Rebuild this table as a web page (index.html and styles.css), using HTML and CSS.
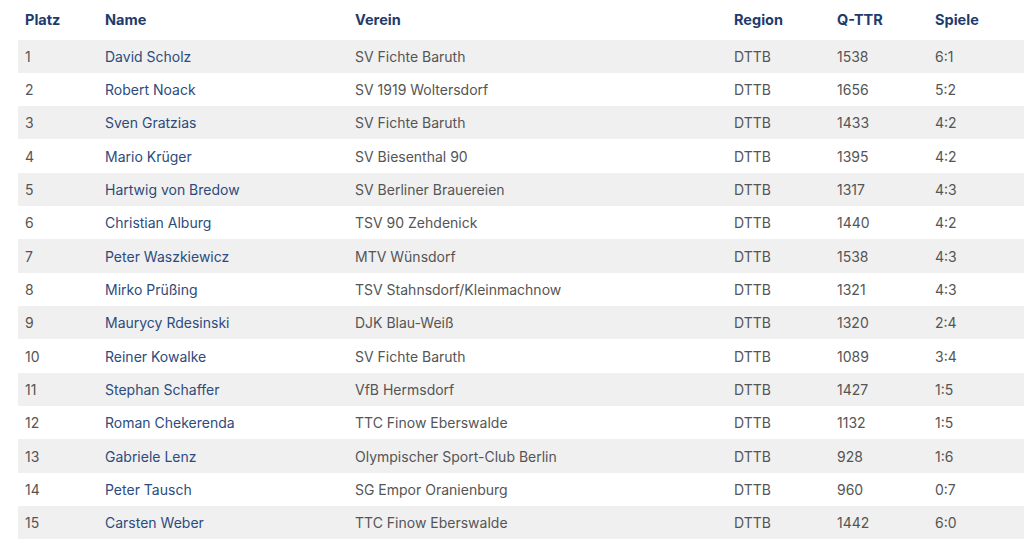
FILE: index.html
```html
<!DOCTYPE html>
<html lang="de">
<head>
<meta charset="utf-8">
<title>Rangliste</title>
<link rel="stylesheet" href="styles.css">
</head>
<body>
<div class="wrap">
<table class="ranking">
<colgroup>
<col class="c-platz"><col class="c-name"><col class="c-verein"><col class="c-region"><col class="c-ttr"><col class="c-spiele">
</colgroup>
<thead>
<tr><th>Platz</th><th>Name</th><th>Verein</th><th>Region</th><th>Q-TTR</th><th>Spiele</th></tr>
</thead>
<tbody>
<tr><td>1</td><td class="name">David Scholz</td><td>SV Fichte Baruth</td><td>DTTB</td><td>1538</td><td>6:1</td></tr>
<tr><td>2</td><td class="name">Robert Noack</td><td>SV 1919 Woltersdorf</td><td>DTTB</td><td>1656</td><td>5:2</td></tr>
<tr><td>3</td><td class="name">Sven Gratzias</td><td>SV Fichte Baruth</td><td>DTTB</td><td>1433</td><td>4:2</td></tr>
<tr><td>4</td><td class="name">Mario Krüger</td><td>SV Biesenthal 90</td><td>DTTB</td><td>1395</td><td>4:2</td></tr>
<tr><td>5</td><td class="name">Hartwig von Bredow</td><td>SV Berliner Brauereien</td><td>DTTB</td><td>1317</td><td>4:3</td></tr>
<tr><td>6</td><td class="name">Christian Alburg</td><td>TSV 90 Zehdenick</td><td>DTTB</td><td>1440</td><td>4:2</td></tr>
<tr><td>7</td><td class="name">Peter Waszkiewicz</td><td>MTV Wünsdorf</td><td>DTTB</td><td>1538</td><td>4:3</td></tr>
<tr><td>8</td><td class="name">Mirko Prüßing</td><td>TSV Stahnsdorf/Kleinmachnow</td><td>DTTB</td><td>1321</td><td>4:3</td></tr>
<tr><td>9</td><td class="name">Maurycy Rdesinski</td><td>DJK Blau-Weiß</td><td>DTTB</td><td>1320</td><td>2:4</td></tr>
<tr><td>10</td><td class="name">Reiner Kowalke</td><td>SV Fichte Baruth</td><td>DTTB</td><td>1089</td><td>3:4</td></tr>
<tr><td>11</td><td class="name">Stephan Schaffer</td><td>VfB Hermsdorf</td><td>DTTB</td><td>1427</td><td>1:5</td></tr>
<tr><td>12</td><td class="name">Roman Chekerenda</td><td>TTC Finow Eberswalde</td><td>DTTB</td><td>1132</td><td>1:5</td></tr>
<tr><td>13</td><td class="name">Gabriele Lenz</td><td>Olympischer Sport-Club Berlin</td><td>DTTB</td><td>928</td><td>1:6</td></tr>
<tr><td>14</td><td class="name">Peter Tausch</td><td>SG Empor Oranienburg</td><td>DTTB</td><td>960</td><td>0:7</td></tr>
<tr><td>15</td><td class="name">Carsten Weber</td><td>TTC Finow Eberswalde</td><td>DTTB</td><td>1442</td><td>6:0</td></tr>
</tbody>
</table>
</div>
</body>
</html>
```
FILE: styles.css
```css
html, body {
  margin: 0;
  padding: 0;
  background: #ffffff;
  overflow: hidden;
}
.wrap {
  padding-left: 18px;
}
.ranking {
  border-collapse: collapse;
  table-layout: fixed;
  width: 1020px;
  font-family: Inter, "Noto Sans", sans-serif;
  font-size: 14px;
  color: #555555;
}
.c-platz { width: 80px; }
.c-name { width: 250px; }
.c-verein { width: 379px; }
.c-region { width: 103px; }
.c-ttr { width: 98px; }
.c-spiele { width: 110px; }
.ranking th {
  height: 39.5px;
  padding: 0 0 0 7px;
  text-align: left;
  vertical-align: middle;
  font-weight: 700;
  color: #1f3b6b;
  font-size: 14.5px;
}
.ranking td {
  height: 33.33px;
  padding: 0 0 0 7px;
  vertical-align: middle;
  white-space: nowrap;
}
.ranking tbody tr:nth-child(odd) {
  background: #f0f0f0;
}
.ranking td.name {
  color: #2d4b7c;
}
```
